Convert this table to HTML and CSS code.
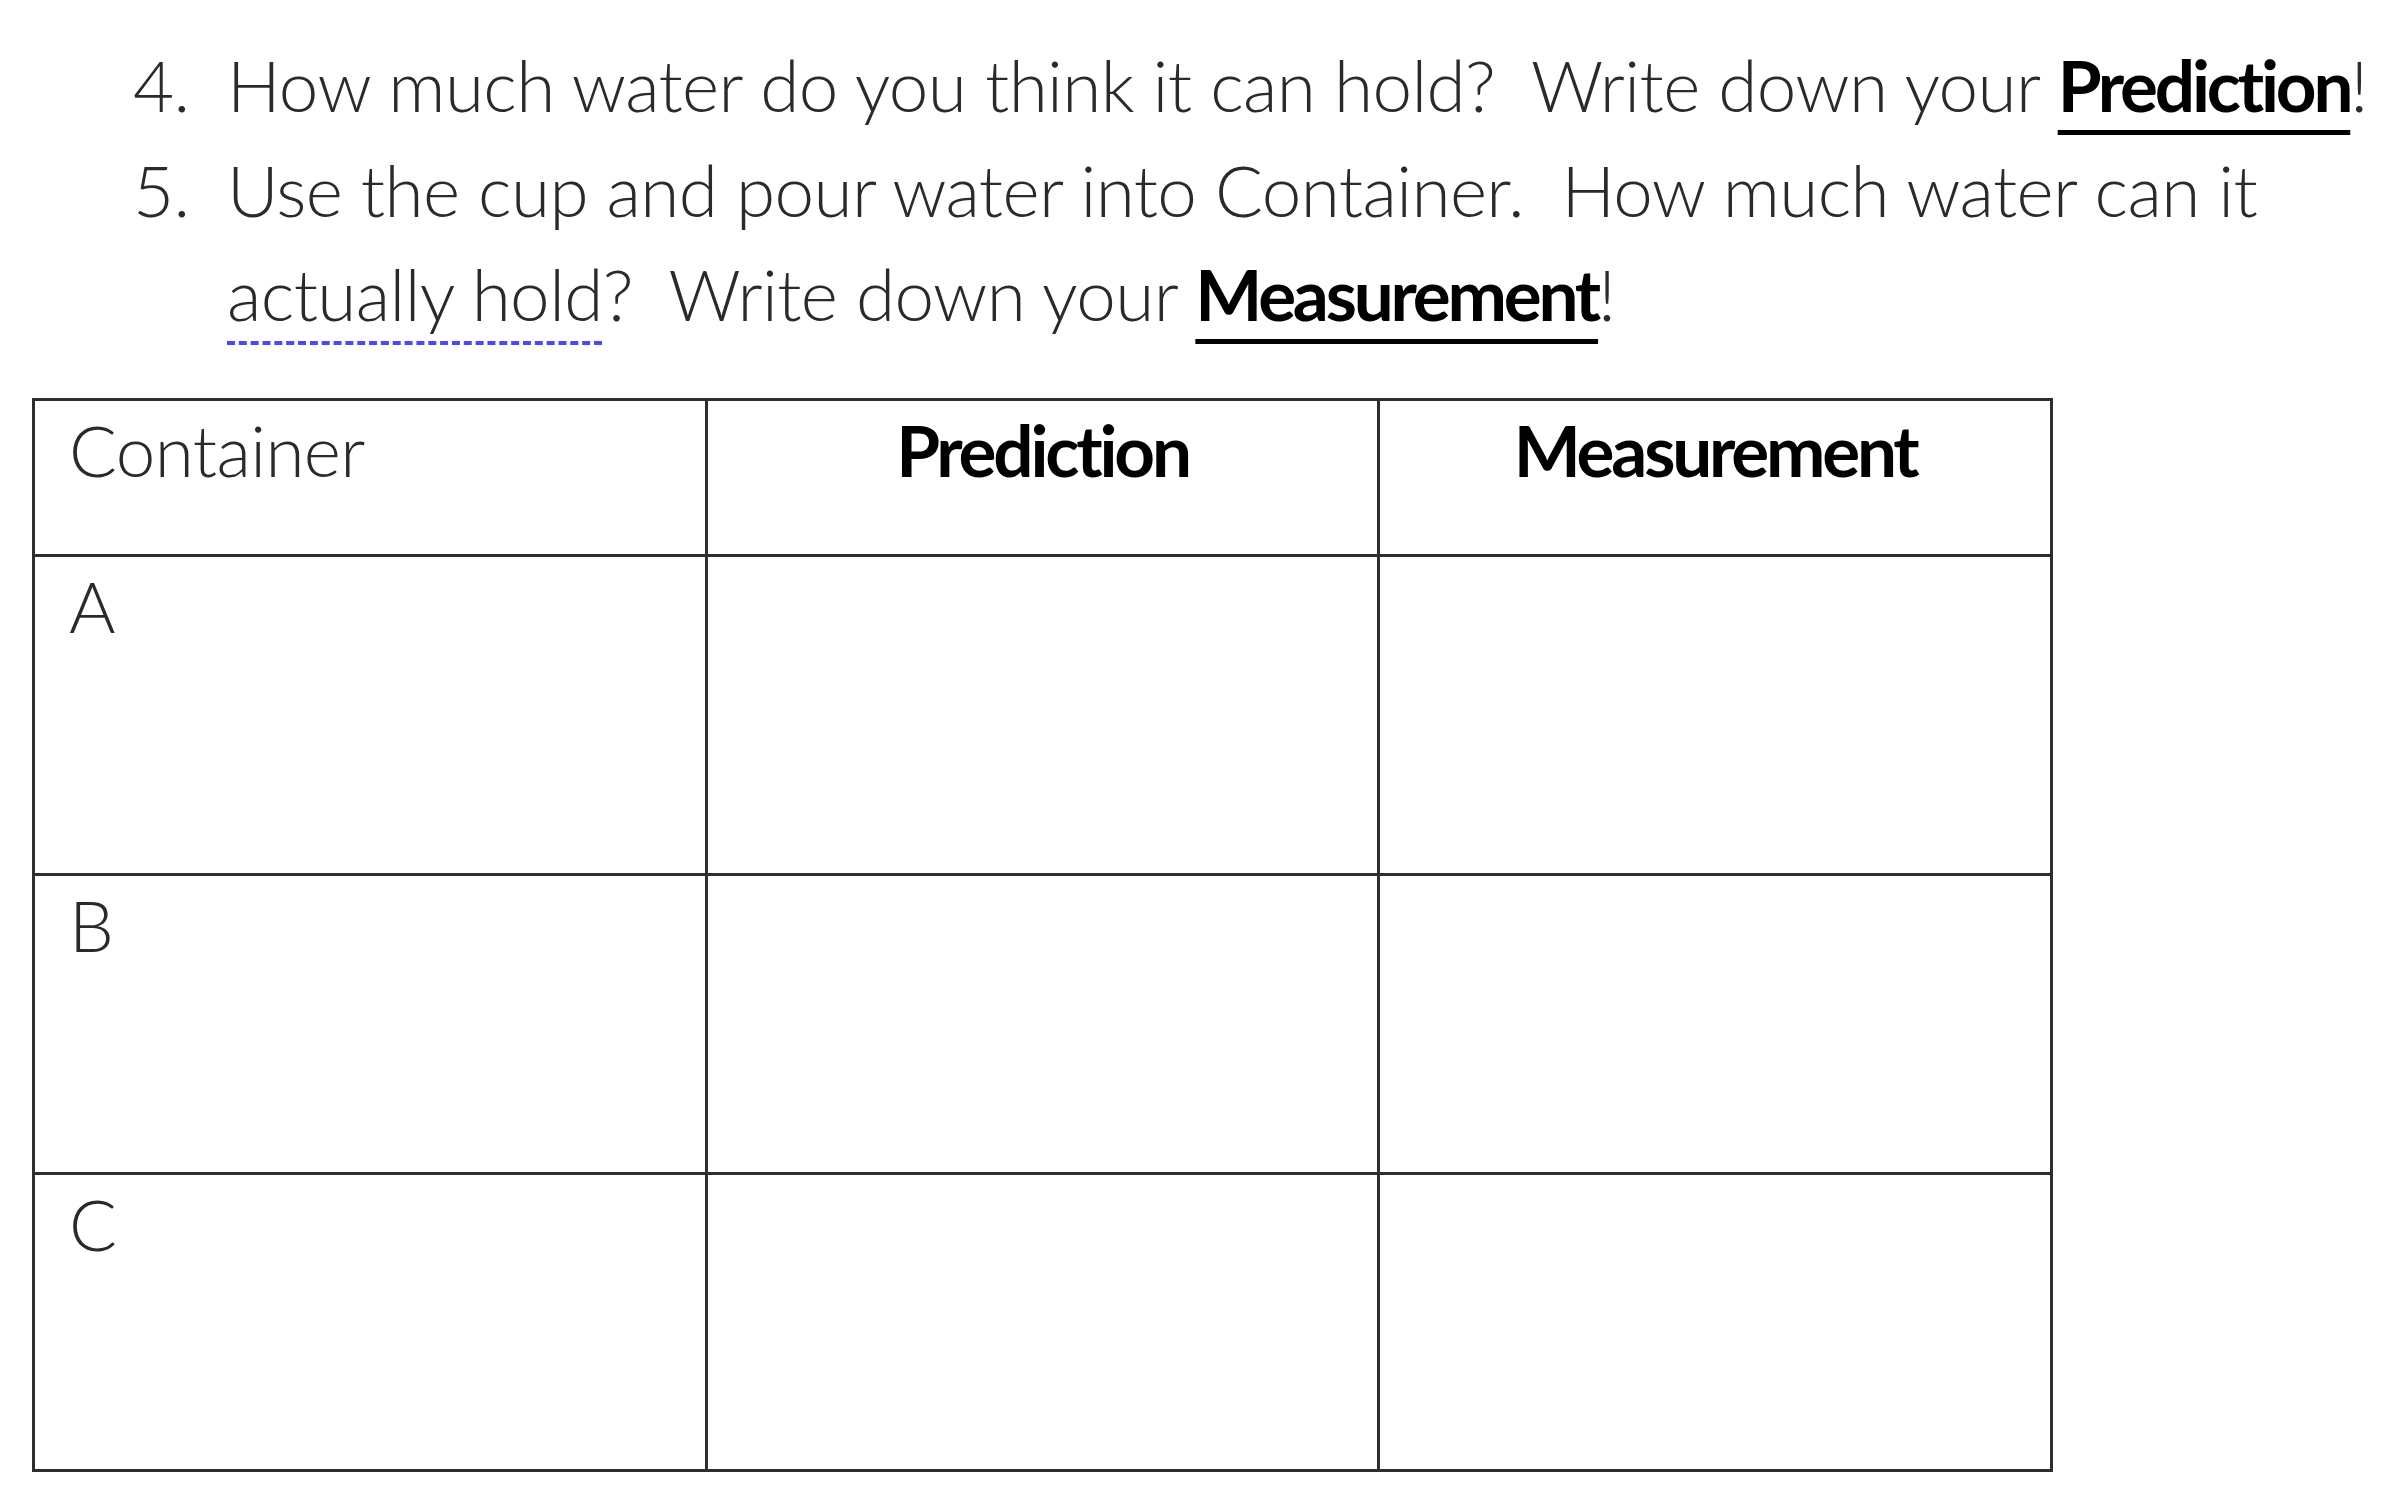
FILE: index.html
```html
<!DOCTYPE html>
<html lang="en">
<head>
<meta charset="utf-8">
<title>Container worksheet</title>
<link rel="stylesheet" href="styles.css">
</head>
<body>
<div class="page">
  <div class="steps">
    <div class="step">
      <span class="num">4.</span>
      <span class="txt">How much water do you think it can hold?&nbsp; Write down your <span class="key">Prediction</span>!</span>
    </div>
    <div class="step">
      <span class="num">5.</span>
      <span class="txt">Use the cup and pour water into Container.&nbsp; How much water can it<br><span class="spell">actually hold</span>?&nbsp; Write down your <span class="key">Measurement</span>!</span>
    </div>
  </div>
  <table class="grid">
    <colgroup><col class="c1"><col class="c2"><col class="c3"></colgroup>
    <tr class="r-head">
      <td class="label">Container</td>
      <td class="head">Prediction</td>
      <td class="head">Measurement</td>
    </tr>
    <tr class="r-a">
      <td class="label">A</td><td></td><td></td>
    </tr>
    <tr class="r-b">
      <td class="label">B</td><td></td><td></td>
    </tr>
    <tr class="r-c">
      <td class="label">C</td><td></td><td></td>
    </tr>
  </table>
</div>
</body>
</html>
```
FILE: styles.css
```css
html, body {
  margin: 0;
  padding: 0;
  background: #ffffff;
}

.page {
  width: 2392px;
  height: 1505px;
  overflow: hidden;
  font-family: "Lato", "Open Sans", "Liberation Sans", sans-serif;
  font-weight: 300;
  color: #2a2a2a;
}

.steps {
  padding-top: 33px;
  font-size: 71px;
  line-height: 104.5px;
  letter-spacing: -0.6px;
  white-space: nowrap;
}

.step {
  display: flex;
  padding-left: 133px;
}

.num {
  flex: 0 0 94px;
}

.txt {
  white-space: nowrap;
}

.key {
  font-weight: 700;
  color: #000;
  letter-spacing: -3.2px;
  text-decoration: underline;
  text-decoration-thickness: 5px;
  text-underline-offset: 18px;
  text-decoration-color: #000;
}

.spell {
  text-decoration: underline dashed #4a4af5;
  text-decoration-thickness: 4px;
  text-underline-offset: 20px;
}

.grid {
  margin-top: 51px;
  margin-left: 32px;
  width: 2021px;
  table-layout: fixed;
  border-collapse: collapse;
  font-size: 71px;
  line-height: 71px;
  letter-spacing: -0.6px;
}

.grid td {
  border: 3px solid #2e2e2e;
  padding: 13px 10px 0 34px;
  vertical-align: top;
}

.grid .head {
  text-align: center;
  padding-left: 10px;
  font-weight: 700;
  color: #000;
  letter-spacing: -3.2px;
}

.r-head { height: 156px; }
.r-a { height: 319px; }
.r-b { height: 299px; }
.r-c { height: 297px; }
```
